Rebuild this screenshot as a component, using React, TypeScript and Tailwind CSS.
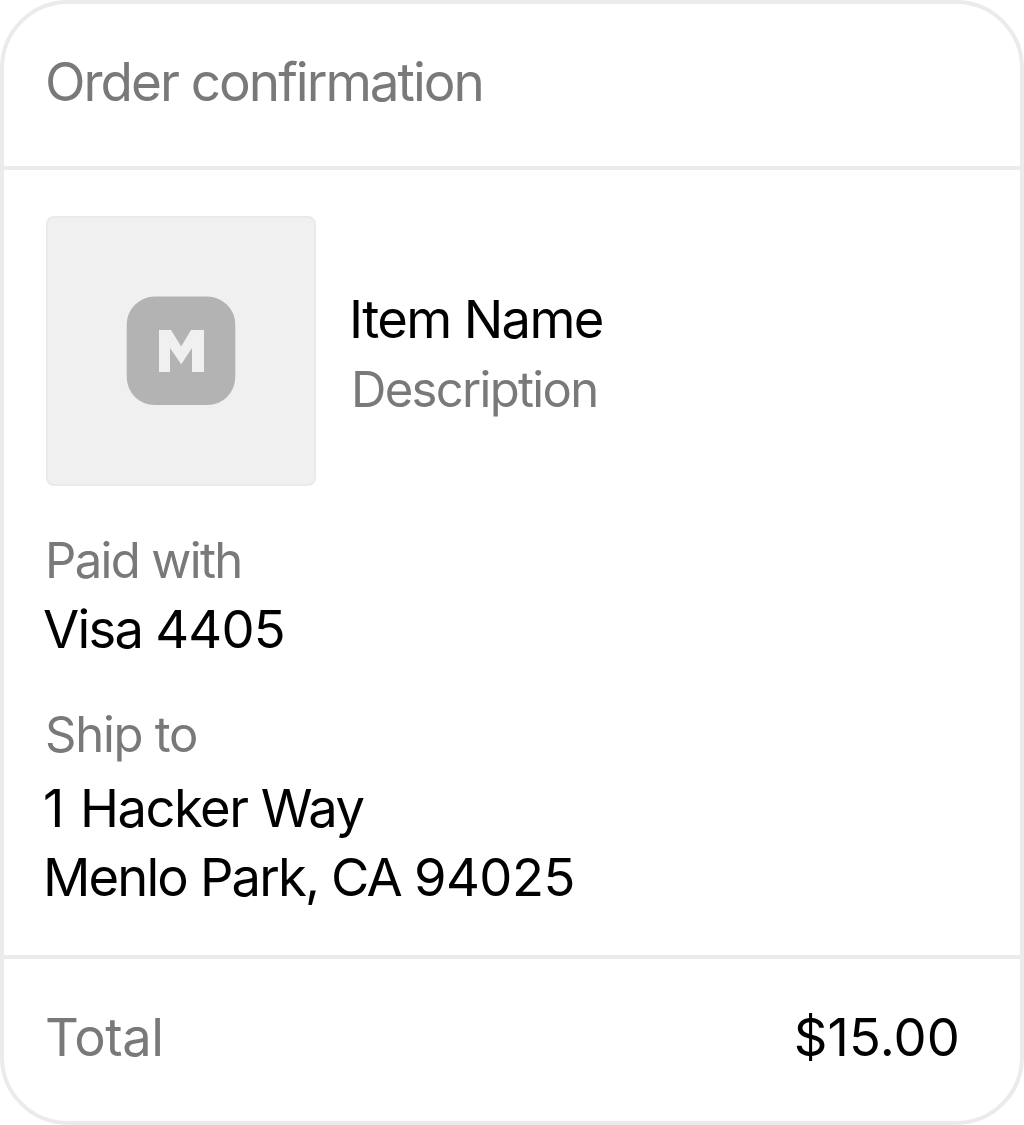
const LINE = "block whitespace-nowrap";

export default function App() {
  return (
    <div className="flex h-[1125px] w-[1024px] flex-col overflow-hidden rounded-[68px] border-4 border-[#ebebeb] bg-white font-['Inter',sans-serif] text-black">
      <header className="flex h-[166px] shrink-0 items-start border-b-4 border-[#ebebeb] pt-[43px] pl-[41px] text-[#797979]">
        <h1 className={`${LINE} text-[53px] leading-[70px] tracking-[-2px]`}>Order confirmation</h1>
      </header>
      <main className="flex h-[789px] shrink-0 flex-col border-b-4 border-[#ebebeb] pt-[46px] pl-[42px]">
        <section className="flex h-[270px]">
          <div className="flex size-[270px] items-center justify-center rounded-[8px] border-2 border-[#eaeaea] bg-[#f0f0f0]">
            <svg width="110" height="110" viewBox="0 0 110 110">
              <rect x="0.7" y="0.5" width="108.6" height="108.6" rx="28" fill="#b3b3b3" />
              <path d="M33 76V34H45L55.2 50.5L65 34H78V76H66V52L55.2 68.3L44 52V76Z" fill="#f0f0f0" />
            </svg>
          </div>
          <div className="pt-[68px] pl-[33px]">
            <p className={`${LINE} text-[52.5px] leading-[70px] tracking-[-1.65px]`}>Item Name</p>
            <p className={`${LINE} pl-[2px] text-[49px] leading-[72px] tracking-[-1.7px] text-[#797979]`}>Description</p>
          </div>
        </section>
        <section className="pt-[39px]">
          <p className={`${LINE} -ml-px text-[49px] leading-[71px] tracking-[-1.65px] text-[#797979]`}>Paid with</p>
          <p className={`${LINE} -ml-[3px] text-[52.5px] leading-[66px] tracking-[-1.75px]`}>
            Visa <span className="tracking-[-0.75px]">4405</span>
          </p>
        </section>
        <section className="pt-[38px]">
          <p className={`${LINE} -ml-px text-[49px] leading-[70px] tracking-[-1.25px] text-[#797979]`}>Ship to</p>
          <div className="-ml-[3px] pt-[4px] text-[52.5px] leading-[69px]">
            <p className={`${LINE} tracking-[-1.5px]`}>
              <span className="tracking-[0.4px]">1 </span>Hacker Way
            </p>
            <p className={`${LINE} tracking-[-1.85px]`}>
              Menlo Park, CA <span className="tracking-[-0.5px]">94025</span>
            </p>
          </div>
        </section>
      </main>
      <footer className="flex justify-between pt-[43px] pr-[60px] pl-[41px]">
        <span className={`${LINE} text-[52.5px] leading-[70px] tracking-[-0.5px] text-[#797979]`}>Total</span>
        <span className={`${LINE} text-[52.5px] leading-[70px] tracking-[0.1px]`}>$15.00</span>
      </footer>
    </div>
  );
}
